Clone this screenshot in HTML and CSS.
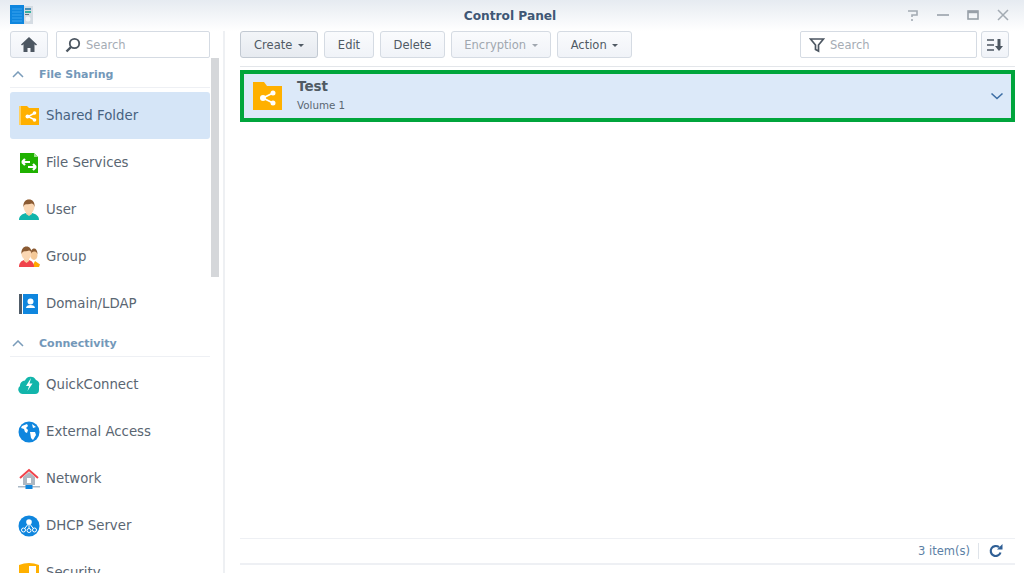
FILE: index.html
```html
<!DOCTYPE html>
<html lang="en">
<head>
  <meta charset="UTF-8">
  <meta name="viewport" content="width=device-width, initial-scale=1.0">
  <title>Control Panel</title>
  <link rel="stylesheet" href="styles.css">
</head>
<body>
  <div class="window">
    <!-- Title bar -->
    <header class="titlebar">
      <svg class="app-icon" width="24" height="20" viewBox="0 0 24 20">
        <rect x="13" y="1" width="10" height="18" fill="#d5dce3"/>
        <rect x="15" y="3" width="6" height="2" fill="#4a8fb5"/>
        <rect x="15" y="6" width="6" height="2" fill="#37b0a0"/>
        <rect x="15" y="9" width="4" height="1" fill="#607080"/>
        <circle cx="18" cy="14" r="2.5" fill="#f2f4f6"/>
        <rect x="0" y="0" width="14" height="19" fill="#0f86de"/>
        <path d="M2 4h10M2 7h10M2 10h10M2 13h10M2 16h10" stroke="#3aa3ee" stroke-width="1"/>
      </svg>
      <div class="window-title">Control Panel</div>
      <div class="window-controls">
        <svg width="14" height="14" viewBox="0 0 14 14"><path d="M2 3h9v4H6v2M6 11v2" fill="none" stroke="#a3abb3" stroke-width="1.6"/></svg>
        <svg width="14" height="14" viewBox="0 0 14 14"><path d="M1 7h12" stroke="#a3abb3" stroke-width="1.8"/></svg>
        <svg width="14" height="14" viewBox="0 0 14 14"><rect x="2" y="3" width="10" height="8" fill="none" stroke="#98a0a8" stroke-width="1.6"/><path d="M2 4h10" stroke="#98a0a8" stroke-width="2.4"/></svg>
        <svg width="14" height="14" viewBox="0 0 14 14"><path d="M2 2l10 10M12 2L2 12" stroke="#a3abb3" stroke-width="1.5"/></svg>
      </div>
    </header>

    <div class="content">
      <!-- Sidebar -->
      <aside class="sidebar">
        <div class="sidebar-top">
          <button class="btn home-btn">
            <svg width="16" height="15" viewBox="0 0 16 15"><path d="M8 0L0 7.5l1 1 1.5-1.3V15h4v-4h3v4h4V7.200L15 8.500l1-1z" fill="#4c5661"/></svg>
          </button>
          <div class="search-box side-search">
            <svg width="16" height="16" viewBox="0 0 16 16"><circle cx="9.500" cy="6.500" r="4.700" fill="none" stroke="#4c5661" stroke-width="1.800"/><path d="M6 10l-4.500 4.500" stroke="#4c5661" stroke-width="2.400"/></svg>
            <span>Search</span>
          </div>
        </div>

        <div class="group-head">
          <svg width="12" height="7" viewBox="0 0 12 7"><path d="M1 6l5-5 5 5" fill="none" stroke="#7a9cba" stroke-width="1.500"/></svg>
          File Sharing
        </div>
        <div class="nav-item active">
          <svg class="nav-icon" width="22" height="22" viewBox="0 0 22 22">
            <path d="M1 1h8l2 2h10v17H1z" fill="#ffb000"/>
            <path d="M1 1h2v19H1z" fill="#ffd060"/>
            <path d="M17 8l-7 3.500 7 3.500" fill="none" stroke="#fff" stroke-width="1.400"/>
            <circle cx="9.500" cy="11.500" r="2" fill="#fff"/><circle cx="16.500" cy="8" r="1.800" fill="#fff"/><circle cx="16.500" cy="15" r="1.800" fill="#fff"/>
          </svg>
          Shared Folder
        </div>
        <div class="nav-item">
          <svg class="nav-icon" width="22" height="22" viewBox="0 0 22 22">
            <path d="M2 1h14l4 4v16H2z" fill="#1fb100"/>
            <path d="M16 1l4 4h-4z" fill="#9fe08f"/>
            <path d="M4 10h8M4 10l3-3M4 10l3 3M18 15h-8M18 15l-3-3M18 15l-3 3" fill="none" stroke="#fff" stroke-width="2.200"/>
          </svg>
          File Services
        </div>
        <div class="nav-item">
          <svg class="nav-icon" width="22" height="22" viewBox="0 0 22 22">
            <path d="M1 21c0-4 3-6 7-7h6c4 1 7 3 7 7z" fill="#12b5ab"/>
            <path d="M8 12h6v3l-3 2-3-2z" fill="#f8cfa6"/>
            <ellipse cx="11" cy="7.500" rx="5.500" ry="7" fill="#fbd7b3"/>
            <path d="M5.500 8C5 3 7.500 0.500 11 0.500S17 3 16.500 8C16 5.500 15 4.500 13.500 4.500 11.500 5.500 8 5 7 5.500 6 6 6 7 5.500 8z" fill="#8a5a32"/>
          </svg>
          User
        </div>
        <div class="nav-item">
          <svg class="nav-icon" width="22" height="22" viewBox="0 0 22 22">
            <ellipse cx="16" cy="9" rx="3.500" ry="5" fill="#f5c998"/>
            <path d="M12.500 8c0-4 2-5.500 3.700-5.500S19.500 4.500 19.500 8c-1-2-2-2.500-3-2.500s-3 .5-4 2.500z" fill="#8a5a32"/>
            <path d="M14 21l3-6 5 3.500-1 2.500z" fill="#ffa800"/>
            <path d="M1 21c0-4 2-6 5-7h5c3 1 5 3 5 7z" fill="#f0434b"/>
            <path d="M6 12h5v3l-2.500 2L6 15z" fill="#f8cfa6"/>
            <ellipse cx="8.500" cy="7.500" rx="5" ry="6.500" fill="#fbd7b3"/>
            <path d="M3.500 8C3 3 5.500 0.500 8.500 0.500S14 3 13.500 8C13 5.500 12.500 4.500 11 4.500 9 5.500 6.500 5 5.500 5.500 4.500 6 4 7 3.500 8z" fill="#8a5a32"/>
          </svg>
          Group
        </div>
        <div class="nav-item">
          <svg class="nav-icon" width="22" height="22" viewBox="0 0 22 22">
            <rect x="1" y="1" width="3" height="20" fill="#505c68"/>
            <rect x="5" y="1" width="15" height="20" fill="#0f86de"/>
            <circle cx="12.500" cy="8.500" r="3" fill="#fff"/>
            <path d="M8 15c0-2 2-3 4.500-3s4.500 1 4.500 3z" fill="#fff"/>
          </svg>
          Domain/LDAP
        </div>

        <div class="group-head">
          <svg width="12" height="7" viewBox="0 0 12 7"><path d="M1 6l5-5 5 5" fill="none" stroke="#7a9cba" stroke-width="1.500"/></svg>
          Connectivity
        </div>
        <div class="nav-item">
          <svg class="nav-icon" width="22" height="22" viewBox="0 0 22 22">
            <path d="M5 20a4.500 4.500 0 0 1-3-8 5 5 0 0 1 5-5.500A6 6 0 0 1 18 6a5 5 0 0 1 3 6v4a4 4 0 0 1-4 4z" fill="#12b5ab"/>
            <path d="M13 4l-5 8h3l-1.500 5 5-7.500h-3z" fill="#fff"/>
          </svg>
          QuickConnect
        </div>
        <div class="nav-item">
          <svg class="nav-icon" width="22" height="22" viewBox="0 0 22 22">
            <circle cx="11" cy="11" r="10.500" fill="#0f86de"/>
            <path d="M4 5l5-2 1 2-2 2 2 2-1 3-2-1-1-3-3-1zM12 11l5 0 1 3-3 5-2-2zM14 3l4 3-3 1z" fill="#fff"/>
          </svg>
          External Access
        </div>
        <div class="nav-item">
          <svg class="nav-icon" width="22" height="22" viewBox="0 0 22 22">
            <path d="M5 9l6-5 6 5v8H5z" fill="#aeb8c2"/>
            <path d="M2 10l9-8 9 8" fill="none" stroke="#f0434b" stroke-width="2"/>
            <rect x="9" y="10" width="4" height="5" fill="#fff"/>
            <rect x="0" y="18" width="22" height="1.500" fill="#a9b8c6"/>
            <rect x="7.500" y="17" width="7" height="4" fill="#0f86de"/>
          </svg>
          Network
        </div>
        <div class="nav-item">
          <svg class="nav-icon" width="22" height="22" viewBox="0 0 22 22">
            <circle cx="11" cy="11" r="10.500" fill="#0f86de"/>
            <circle cx="11" cy="7" r="2.800" fill="#fff"/>
            <path d="M11 8L5.500 15M11 8v7M11 8l5.500 7" stroke="#fff" stroke-width="1"/>
            <g fill="#0f86de" stroke="#fff" stroke-width="1"><circle cx="5.500" cy="15" r="2"/><circle cx="11" cy="15.500" r="2"/><circle cx="16.500" cy="15" r="2"/></g>
          </svg>
          DHCP Server
        </div>
        <div class="nav-item">
          <svg class="nav-icon" width="22" height="22" viewBox="0 0 22 22">
            <path d="M1 3q10-4 20 0v10q-2 6-10 9-8-3-10-9z" fill="#ffb000"/>
            <rect x="11" y="4" width="7" height="7" fill="#fff"/>
          </svg>
          Security
        </div>

        <div class="scroll-thumb"></div>
      </aside>

      <!-- Main panel -->
      <main class="main">
        <div class="toolbar">
          <button class="btn pressed">Create <i class="caret"></i></button>
          <button class="btn edit-btn">Edit</button>
          <button class="btn delete-btn">Delete</button>
          <button class="btn disabled">Encryption <i class="caret"></i></button>
          <button class="btn action-btn">Action <i class="caret"></i></button>
          <div class="toolbar-right">
            <div class="search-box filter-search">
              <svg width="16" height="16" viewBox="0 0 16 16"><path d="M1.500 2h13L9.500 8v6l-3-1.500V8z" fill="none" stroke="#4c5661" stroke-width="1.700"/></svg>
              <span>Search</span>
            </div>
            <button class="btn sort-btn">
              <svg width="18" height="14" viewBox="0 0 18 14"><path d="M1 2h7M1 7h7M1 12h7" stroke="#4c5661" stroke-width="1.600"/><path d="M13 1v8" stroke="#4c5661" stroke-width="3"/><path d="M9 8h8l-4 5z" fill="#4c5661"/></svg>
            </button>
          </div>
        </div>

        <div class="list">
          <div class="folder-row">
            <svg width="29" height="28" viewBox="0 0 29 28">
              <path d="M0 0h11l3 4h15v24H0z" fill="#ffb000"/>
              <path d="M20 11l-10 5 10 5" fill="none" stroke="#fff" stroke-width="1.800"/>
              <circle cx="10" cy="16" r="3" fill="#fff"/><circle cx="20" cy="11" r="2.500" fill="#fff"/><circle cx="20" cy="21" r="2.500" fill="#fff"/>
            </svg>
            <div class="folder-text">
              <div class="folder-name">Test</div>
              <div class="folder-volume">Volume 1</div>
            </div>
            <svg class="expand" width="14" height="8" viewBox="0 0 14 8"><path d="M1.500 1.500L7 6.500l5.500-5" fill="none" stroke="#3d6ea5" stroke-width="1.600"/></svg>
          </div>
        </div>

        <footer class="statusbar">
          <span class="count">3 item(s)</span>
          <svg width="14" height="14" viewBox="0 0 14 14"><path d="M11.500 8.500A5 5 0 1 1 10 3.200" fill="none" stroke="#2f5f95" stroke-width="2.200"/><path d="M8 5.500h5.500V0z" fill="#2f5f95"/></svg>
        </footer>
      </main>
    </div>
  </div>
</body>
</html>
```

FILE: styles.css
```css
* {
  box-sizing: border-box;
}
body {
  margin: 0;
  background-color: #fff;
  font-family: "DejaVu Sans", Verdana, sans-serif;
  color: #505a64;
}
.window {
  display: flex;
  flex-direction: column;
  width: 1024px;
  height: 573px;
  overflow: hidden;
}
.titlebar {
  display: grid;
  grid-template-columns: 1fr auto 1fr;
  align-items: center;
  flex: none;
  height: 31px;
  padding: 0 14px 0 10px;
  background: linear-gradient(#e6ebf1, #fff);
}
.app-icon {
  margin-top: -2px;
}
.window-title {
  font-size: 12.200px;
  font-weight: bold;
  color: #3f5775;
}
.window-controls {
  display: flex;
  justify-content: flex-end;
  gap: 16px;
  margin-top: -1px;
}
.content {
  display: flex;
  flex: 1;
  min-height: 0;
}

/* Sidebar */
.sidebar {
  position: relative;
  flex: none;
  width: 225px;
  padding: 0 13px 0 10px;
  border-right: 2px solid #eef0f3;
  overflow: hidden;
}
.sidebar-top {
  display: flex;
  gap: 8px;
}
.btn {
  height: 27px;
  padding: 0 12px;
  font-family: inherit;
  font-size: 11.500px;
  color: #505a64;
  background: linear-gradient(#fafbfd, #f0f3f8);
  border: 1px solid #d5dbe3;
  border-radius: 3px;
}
.home-btn {
  display: flex;
  align-items: center;
  justify-content: center;
  width: 38px;
  padding: 0;
}
.search-box {
  display: flex;
  align-items: center;
  gap: 5px;
  height: 27px;
  padding-left: 8px;
  font-size: 11.500px;
  color: #a5acb4;
  background-color: #fff;
  border: 1px solid #d5dbe3;
  border-radius: 2px;
}
.side-search {
  flex: 1;
}
.group-head {
  display: flex;
  align-items: center;
  gap: 15px;
  height: 27px;
  margin-top: 3px;
  margin-bottom: 4px;
  padding-left: 2px;
  font-size: 11px;
  font-weight: bold;
  color: #7398b9;
  border-bottom: 1px solid #eef0f4;
}
.nav-item {
  display: flex;
  align-items: center;
  gap: 6px;
  height: 47px;
  padding-left: 8px;
  font-size: 13.300px;
  color: #5a6672;
  border-radius: 3px;
}
.nav-item.active {
  color: #47627f;
  background-color: #d5e5f7;
}
.nav-icon {
  flex: none;
}
.scroll-thumb {
  position: absolute;
  top: 27px;
  left: 211px;
  width: 8px;
  height: 219px;
  background-color: #d5d7da;
}

/* Main panel */
.main {
  display: flex;
  flex-direction: column;
  flex: 1;
  min-width: 0;
  padding: 0 9px 8px 15px;
}
.toolbar {
  display: flex;
  flex: none;
  gap: 6px;
  height: 36px;
  border-bottom: 1px solid #e3e6ea;
}
.btn.pressed {
  width: 78px;
  padding: 0;
  background: linear-gradient(#f3f5f8, #e6eaf0);
  border-color: #c2c9d2;
}
.edit-btn {
  width: 50px;
  padding: 0;
}
.delete-btn {
  width: 65px;
  padding: 0;
}
.btn.disabled {
  width: 100px;
  padding: 0;
  color: #a0a7af;
}
.action-btn {
  width: 75px;
  padding: 0;
}
.caret {
  display: inline-block;
  margin-left: 2px;
  vertical-align: middle;
  border-top: 3px solid currentColor;
  border-left: 3px solid transparent;
  border-right: 3px solid transparent;
}
.toolbar-right {
  display: flex;
  gap: 4px;
  margin-left: auto;
  margin-right: 6px;
}
.filter-search {
  width: 177px;
}
.sort-btn {
  display: flex;
  align-items: center;
  justify-content: center;
  width: 28px;
  padding: 0;
}
.list {
  flex: 1;
  padding-top: 3px;
}
.folder-row {
  display: flex;
  align-items: center;
  gap: 15px;
  height: 52px;
  padding: 0 7px 0 9px;
  background-color: #dce9f9;
  border: 4px solid #00a53c;
}
.folder-text {
  flex: 1;
  margin-top: -3px;
}
.folder-name {
  font-size: 13.500px;
  font-weight: bold;
  color: #505a64;
}
.folder-volume {
  margin-top: 5px;
  font-size: 10.300px;
  color: #5a6672;
}
.statusbar {
  display: flex;
  align-items: center;
  justify-content: flex-end;
  flex: none;
  gap: 10px;
  height: 27px;
  padding-right: 12px;
  border-top: 1px solid #eef0f4;
  border-bottom: 2px solid #eef0f4;
}
.count {
  padding-right: 8px;
  font-size: 11.500px;
  line-height: 16px;
  color: #5c7fa5;
  border-right: 1px solid #dfe4ea;
}
```
